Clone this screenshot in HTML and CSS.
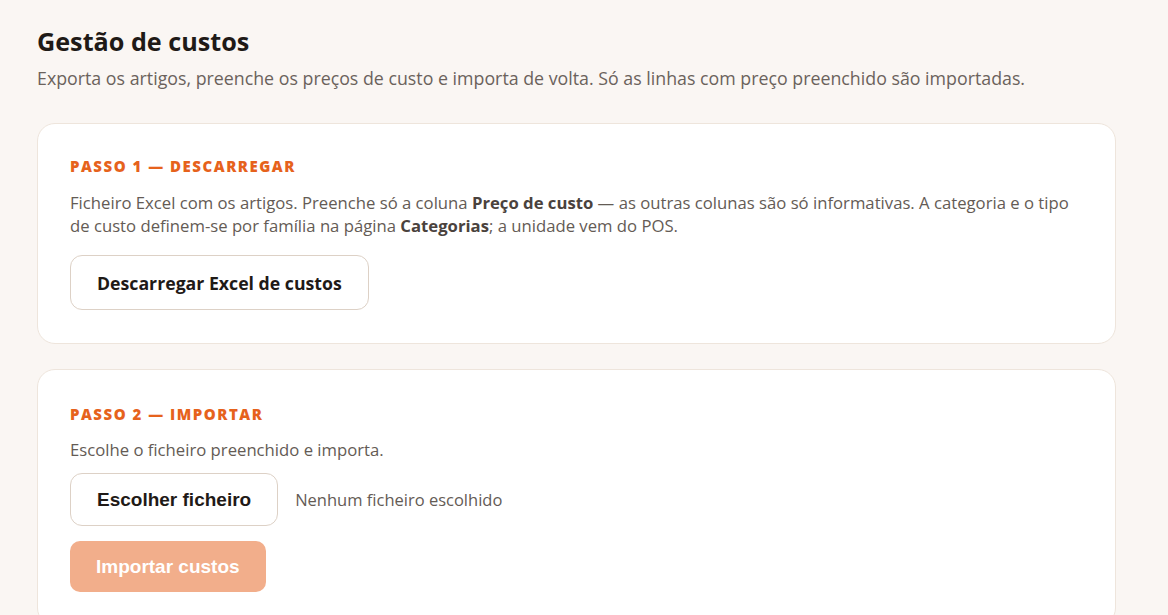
FILE: index.html
```html
<!DOCTYPE html>
<html lang="pt">
<head>
<meta charset="utf-8">
<title>Gestão de custos</title>
<link rel="stylesheet" href="styles.css">
</head>
<body>
<main class="page">
  <header class="page-head">
    <h1 class="title">Gestão de custos</h1>
    <p class="subtitle">Exporta os artigos, preenche os preços de custo e importa de volta. Só as linhas com preço preenchido são importadas.</p>
  </header>

  <section class="card">
    <h2 class="step">Passo 1 — Descarregar</h2>
    <p class="text">Ficheiro Excel com os artigos. Preenche só a coluna <strong>Preço de custo</strong> — as outras colunas são só informativas. A categoria e o tipo de custo definem-se por família na página <strong>Categorias</strong>; a unidade vem do POS.</p>
    <div class="actions">
      <button class="btn-outline" type="button">Descarregar Excel de custos</button>
    </div>
  </section>

  <section class="card card-import">
    <h2 class="step">Passo 2 — Importar</h2>
    <p class="text text-short">Escolhe o ficheiro preenchido e importa.</p>
    <div class="file-row">
      <button class="btn-file" type="button">Escolher ficheiro</button>
      <span class="file-name">Nenhum ficheiro escolhido</span>
    </div>
    <div class="actions-2">
      <button class="btn-primary" type="button" disabled>Importar custos</button>
    </div>
  </section>
</main>
</body>
</html>
```

FILE: styles.css
```css
html, body {
  margin: 0;
  padding: 0;
  background: #faf6f3;
}
body {
  font-family: "Open Sans", "Noto Sans", sans-serif;
  color: #1f1a17;
}
.page {
  padding: 25px 52px 0 37px;
  display: flex;
  flex-direction: column;
  gap: 25px;
}
.page-head {
  display: flex;
  flex-direction: column;
  padding-bottom: 8px;
}
.title {
  margin: 0;
  font-size: 25.2px;
  line-height: 32px;
  font-weight: 700;
  color: #1f1a17;
}
.subtitle {
  margin: 9px 0 0;
  font-size: 17.8px;
  line-height: 24px;
  color: #6b625c;
}
.card {
  background: #ffffff;
  border: 1px solid #eee5dc;
  border-radius: 18px;
  padding: 32px 32px 33px;
  display: flex;
  flex-direction: column;
}
.card-import {
  padding-top: 34px;
}
.step {
  margin: 0;
  font-size: 15px;
  line-height: 20px;
  font-weight: 800;
  letter-spacing: 1.5px;
  text-transform: uppercase;
  color: #e6621c;
}
.text {
  margin: 15px 0 0;
  font-size: 16.7px;
  line-height: 23px;
  color: #645b55;
}
.text-short {
  margin-top: 14px;
}
.text strong {
  color: #4a423d;
  font-weight: 700;
}
.actions {
  margin-top: 18px;
}
.btn-outline {
  height: 55px;
  padding: 0 26px;
  background: #ffffff;
  border: 1px solid #ddd1c6;
  border-radius: 12px;
  font-family: inherit;
  font-size: 17.7px;
  font-weight: 700;
  color: #1f1a17;
  cursor: pointer;
}
.file-row {
  margin-top: 12px;
  display: flex;
  align-items: center;
  gap: 17px;
}
.btn-file {
  height: 53px;
  padding: 0 26px;
  background: #ffffff;
  border: 1px solid #ddd1c6;
  border-radius: 12px;
  font-family: "Liberation Sans", Arial, sans-serif;
  font-size: 19px;
  font-weight: 700;
  color: #1f1a17;
  cursor: pointer;
}
.file-name {
  font-size: 16.5px;
  color: #645b55;
}
.actions-2 {
  margin-top: 15px;
}
.btn-primary {
  height: 51px;
  padding: 0 26px;
  background: #f2ae8b;
  border: none;
  border-radius: 10px;
  font-family: "Liberation Sans", Arial, sans-serif;
  font-size: 19px;
  font-weight: 700;
  color: #ffffff;
}
```
